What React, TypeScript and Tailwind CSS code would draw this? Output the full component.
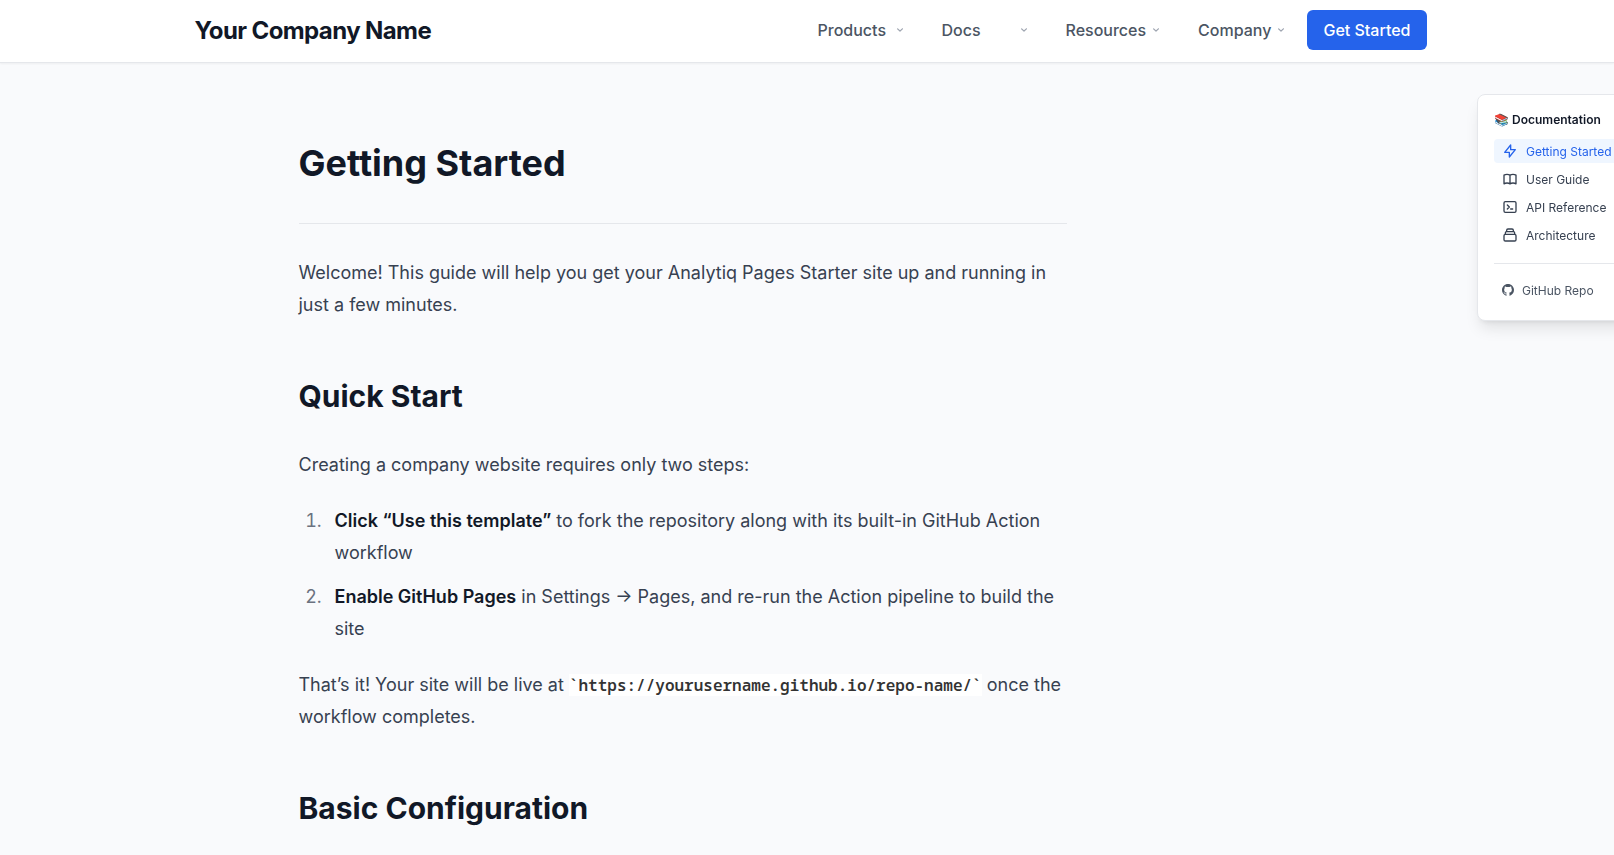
import React from "react";

const navItems = ["Products", "Docs", "Resources", "Company"];

const docLinks = [
  { label: "Getting Started", d: "M13 10V3L4 14h7v7l9-11h-7z", active: true },
  {
    label: "User Guide",
    d: "M12 6.253v13m0-13C10.832 5.477 9.246 5 7.5 5S4.168 5.477 3 6.253v13C4.168 18.477 5.754 18 7.5 18s3.332.477 4.5 1.253m0-13C13.168 5.477 14.754 5 16.5 5c1.747 0 3.332.477 4.5 1.253v13C19.832 18.477 18.247 18 16.5 18c-1.746 0-3.332.477-4.5 1.253",
    active: false,
  },
  {
    label: "API Reference",
    d: "M8 9l3 3-3 3m5 0h3M5 20h14a2 2 0 002-2V6a2 2 0 00-2-2H5a2 2 0 00-2 2v12a2 2 0 002 2z",
    active: false,
  },
  {
    label: "Architecture",
    d: "M19 11H5m14 0a2 2 0 012 2v6a2 2 0 01-2 2H5a2 2 0 01-2-2v-6a2 2 0 012-2m14 0V9a2 2 0 00-2-2M5 11V9a2 2 0 012-2m0 0V5a2 2 0 012-2h6a2 2 0 012 2v2M7 7h10",
    active: false,
  },
];

function Header() {
  return (
    <header className="border-b border-[#e5e7eb] bg-white pl-[7px] shadow-[0_1px_2px_0_rgba(0,0,0,0.05)]">
      <div className="mx-auto flex max-w-[1280px] items-start justify-between px-6 py-[10px]">
        <a href="#home" className="text-2xl leading-[42px] font-bold tracking-tight text-[#111827]">
          Your Company Name
        </a>
        <nav className="flex items-center gap-1">
          {navItems.map((label) => (
            <button
              key={label}
              type="button"
              className="flex h-10 min-w-[120px] items-center justify-between gap-1 px-4 font-medium text-[#4b5563]"
            >
              {label}
              <svg className="h-3 w-3 text-[#9ca3af]" fill="currentColor" viewBox="0 0 20 20">
                <path
                  fillRule="evenodd"
                  clipRule="evenodd"
                  d="M5.293 7.293a1 1 0 011.414 0L10 10.586l3.293-3.293a1 1 0 111.414 1.414l-4 4a1 1 0 01-1.414 0l-4-4a1 1 0 010-1.414z"
                />
              </svg>
            </button>
          ))}
          <a href="#start" className="flex h-10 items-center rounded-md bg-[#2563eb] px-4 font-medium text-white">
            Get Started
          </a>
        </nav>
      </div>
    </header>
  );
}

function DocsPanel() {
  return (
    <aside className="fixed top-[94px] -right-[55px] w-48 rounded-lg border border-[#e5e7eb] bg-white p-4 shadow-lg">
      <h3 className="mb-[10px] text-xs leading-[18px] font-semibold text-[#111827]">📚 Documentation</h3>
      <nav className="flex flex-col gap-1">
        {docLinks.map((link) => (
          <a
            key={link.label}
            href="#docs"
            className={
              link.active
                ? "flex h-6 items-center gap-2 rounded bg-[#eff6ff] px-2 text-xs text-[#2563eb]"
                : "flex h-6 items-center gap-2 rounded px-2 text-xs text-[#374151]"
            }
          >
            <svg className="h-4 w-4" fill="none" stroke="currentColor" viewBox="0 0 24 24">
              <path strokeLinecap="round" strokeLinejoin="round" strokeWidth={2} d={link.d} />
            </svg>
            <span className="pt-px">{link.label}</span>
          </a>
        ))}
      </nav>
      <div className="mt-4 border-t border-[#e5e7eb] pt-[14px] pb-0.5">
        <a href="#repo" className="flex h-6 items-center gap-2 px-2 text-xs text-[#4b5563]">
          <svg className="h-3 w-3" fill="currentColor" viewBox="0 0 24 24">
            <path d="M12 0c-6.626 0-12 5.373-12 12 0 5.302 3.438 9.8 8.207 11.387.599.111.793-.261.793-.577v-2.234c-3.338.726-4.033-1.416-4.033-1.416-.546-1.387-1.333-1.756-1.333-1.756-1.089-.745.083-.729.083-.729 1.205.084 1.839 1.237 1.839 1.237 1.07 1.834 2.807 1.304 3.492.997.107-.775.418-1.305.762-1.604-2.665-.305-5.467-1.334-5.467-5.931 0-1.311.469-2.381 1.236-3.221-.124-.303-.535-1.524.117-3.176 0 0 1.008-.322 3.301 1.23.957-.266 1.983-.399 3.003-.404 1.02.005 2.047.138 3.006.404 2.291-1.552 3.297-1.23 3.297-1.23.653 1.653.242 2.874.118 3.176.77.84 1.235 1.911 1.235 3.221 0 4.609-2.807 5.624-5.479 5.921.43.372.823 1.102.823 2.222v3.293c0 .319.192.694.801.576 4.765-1.589 8.199-6.086 8.199-11.386 0-6.627-5.373-12-12-12z" />
          </svg>
          <span className="pt-px">GitHub Repo</span>
        </a>
      </div>
    </aside>
  );
}

export default function App() {
  return (
    <div className="h-screen overflow-hidden bg-[#f9fafc] font-['Inter',sans-serif] text-base">
      <Header />
      <DocsPanel />
      <main className="pl-[7px]">
        <div className="mx-auto max-w-[1280px] px-32 pt-20">
          <article className="max-w-3xl text-lg leading-8 text-[#374151]">
            <h1 className="border-b border-[#e5e7eb] pb-10 text-4xl leading-10 font-bold text-[#111827]">
              Getting Started
            </h1>
            <p className="mt-[33px]">
              Welcome! This guide will help you get your Analytiq Pages Starter site up and running in just a few
              minutes.
            </p>
            <h2 className="mt-[55px] mb-[33px] text-3xl leading-10 font-bold text-[#111827]">Quick Start</h2>
            <p>Creating a company website requires only two steps:</p>
            <ol className="my-6 flex list-decimal flex-col gap-3 pl-7 marker:text-[#6b7280]">
              <li className="pl-2">
                <strong className="font-semibold text-[#111827]">Click “Use this template”</strong> to fork the
                repository along with its built-in GitHub Action workflow
              </li>
              <li className="pl-2">
                <strong className="font-semibold text-[#111827]">Enable GitHub Pages</strong> in Settings → Pages, and
                re-run the Action pipeline to build the site
              </li>
            </ol>
            <p>
              That’s it! Your site will be live at{" "}
              <code className="bg-white font-['Noto_Sans_Mono',monospace] text-base font-semibold text-[#333333]">
                `https://yourusername.github.io/repo-name/`
              </code>{" "}
              once the workflow completes.
            </p>
            <h2 className="mt-[55px] mb-[33px] text-3xl leading-10 font-bold text-[#111827]">Basic Configuration</h2>
          </article>
        </div>
      </main>
    </div>
  );
}
